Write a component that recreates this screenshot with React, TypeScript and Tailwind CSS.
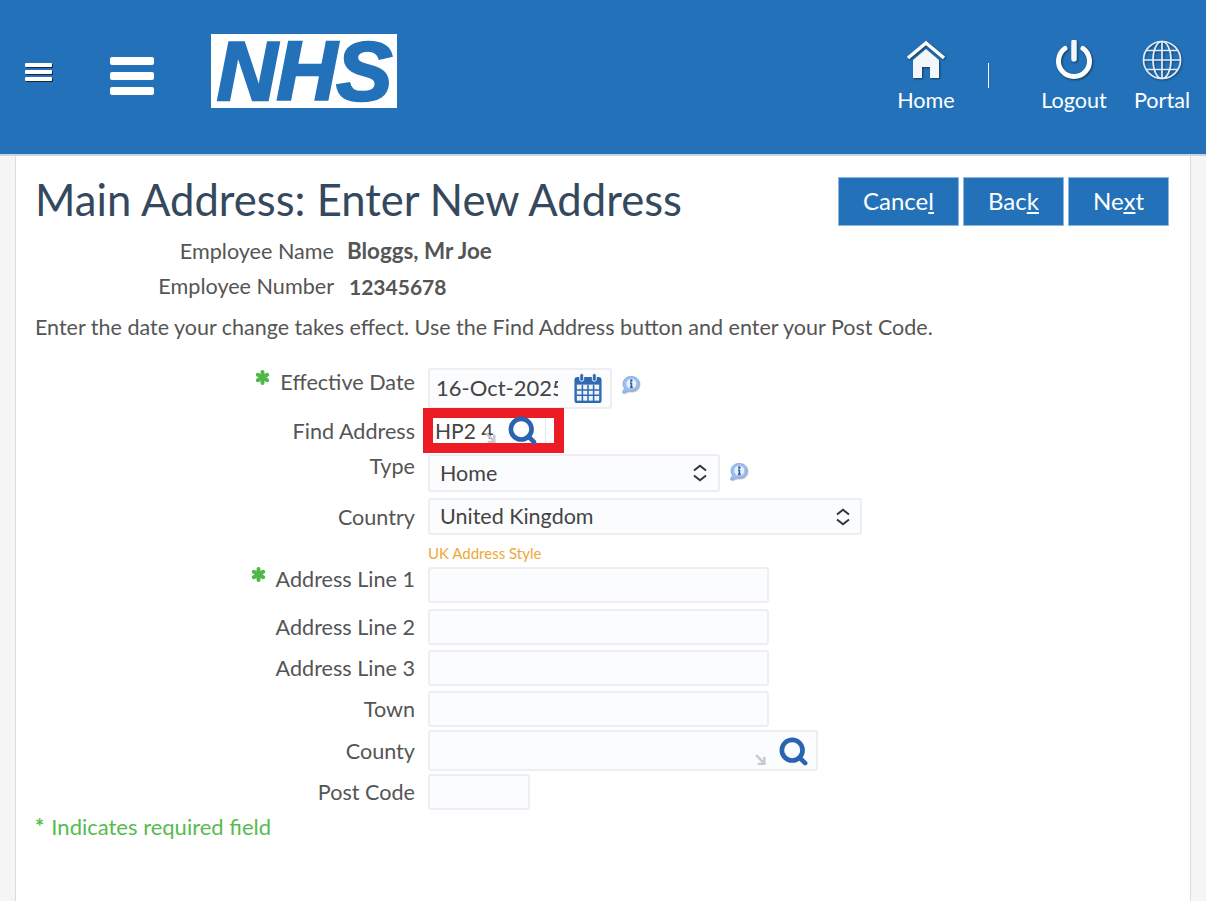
import type { ReactNode } from "react";
import { Search } from "lucide-react";

const lato = "font-['Lato','Liberation_Sans',sans-serif]";

function Star() {
  return (
    <svg viewBox="0 0 16 16" className="w-[15px] h-[15px] mb-[10px] mr-[10px] shrink-0">
      <g stroke="#4fb848" strokeWidth="4.2" strokeLinecap="round">
        <path d="M8 2.2v11.6" />
        <path d="M3 5.1l10 5.8" />
        <path d="M13 5.1L3 10.9" />
      </g>
    </svg>
  );
}

function InfoIcon() {
  return (
    <svg viewBox="0 0 20 20" className="w-[20px] h-[20px] drop-shadow-[1px_1px_0_rgba(0,0,0,0.25)]">
      <path d="M3.5 13.5C2.5 12 2 10.8 2 9 2 5 5.2 1.5 9.5 1.5h1.5c4 0 7 3 7 7s-3 7.5-7 7.5H7l-4.5 1.8c-1 .2-1.4-.6-.9-1.2z" fill="#9dbfee" stroke="#7ba5e0" strokeWidth="0.8" />
      <circle cx="10.3" cy="8.7" r="5" fill="#e8f0fb" />
      <circle cx="10.3" cy="5.6" r="1.3" fill="#2a5fa8" />
      <path d="M10.4 7.8v4.4M9 8h1.4M9 12.4h2.8" stroke="#2a5fa8" strokeWidth="1.6" fill="none" />
    </svg>
  );
}

function CalendarIcon() {
  return (
    <svg viewBox="0 0 30 32" className="w-[30px] h-[31px]">
      <rect x="1" y="4" width="28" height="27" rx="3" fill="#2f69b3" />
      <rect x="3.5" y="12" width="23" height="16.5" fill="#eef3fa" />
      <path d="M9.2 12v17M15 12v17M20.8 12v17M3.5 17.5h23M3.5 23h23" stroke="#2f69b3" strokeWidth="1.6" />
      <rect x="6.5" y="0.5" width="4" height="8" rx="2" fill="#2f69b3" stroke="#fbfcfe" />
      <rect x="19.5" y="0.5" width="4" height="8" rx="2" fill="#2f69b3" stroke="#fbfcfe" />
    </svg>
  );
}

function UpDown() {
  return (
    <svg viewBox="0 0 16 18" className="w-[16px] h-[18px]">
      <path d="M2 6.5L8 1.8l6 4.7M2 11.5l6 4.7 6-4.7" fill="none" stroke="#333" strokeWidth="2" />
    </svg>
  );
}

function CornerArrow({ className }: { className: string }) {
  return (
    <svg viewBox="0 0 10 10" className={className}>
      <path d="M1 1l7 7M8.5 2.5v6.5H2.5" fill="none" stroke="#c9c9c9" strokeWidth="2.2" />
    </svg>
  );
}

function Row({
  label,
  required,
  className,
  labelClass,
  children,
}: {
  label?: string;
  required?: boolean;
  className: string;
  labelClass: string;
  children: ReactNode;
}) {
  return (
    <div className={`flex items-start gap-[13px] ${className}`}>
      <div className={`w-[399px] h-[28px] flex items-center justify-end text-[21.6px] leading-[28px] text-[#555] ${labelClass}`}>
        {required && <Star />}
        {label}
      </div>
      {children}
    </div>
  );
}

const fieldBox = "bg-[#fbfcfe] border-2 border-[#eceef2] rounded-[3px]";

function Btn({ label, under, rest, width }: { label: string; under: string; rest: string; width: string }) {
  return (
    <button className={`h-[49px] ${width} bg-[#2372b9] border border-[#8db8de] text-white text-[24px] pb-[2px]`}>
      {label}
      <span className="underline underline-offset-2">{under}</span>
      {rest}
    </button>
  );
}

export default function App() {
  return (
    <div className={`h-screen overflow-hidden flex flex-col bg-[#f5f5f5] ${lato}`}>
      {/* Header */}
      <header className="h-[156px] shrink-0 bg-[#2372b9] border-b-2 border-[#c9d3dc] flex items-start text-white">
        <div className="ml-[25px] mt-[63px] w-[27px] flex flex-col gap-[3px]">
          <div className="h-[4px] bg-white rounded-[1px] shadow-[1px_1px_0_#1a2530]" />
          <div className="h-[4px] bg-white rounded-[1px] shadow-[1px_1px_0_#1a2530]" />
          <div className="h-[4px] bg-white rounded-[1px] shadow-[1px_1px_0_#1a2530]" />
        </div>
        <div className="ml-[58px] mt-[57px] w-[44px] flex flex-col gap-[7px]">
          <div className="h-[8px] bg-white rounded-[2px]" />
          <div className="h-[8px] bg-white rounded-[2px]" />
          <div className="h-[8px] bg-white rounded-[2px]" />
        </div>
        <div className="ml-[57px] mt-[34px] w-[186px] h-[74px] bg-white flex items-center justify-center">
          <span className="font-['Liberation_Sans',sans-serif] font-bold italic text-[84px] leading-[74px] text-[#2372b9] tracking-[-1px] [-webkit-text-stroke:2.5px_#2372b9]">
            NHS
          </span>
        </div>

        {/* Right nav */}
        <div className="ml-auto relative w-[320px] h-full text-[21.6px]">
          <div className="absolute left-[5px] top-[40px] w-[70px] flex flex-col items-center">
            <svg viewBox="0 0 40 40" className="w-[40px] h-[40px] drop-shadow-[1px_1px_1px_rgba(0,0,0,0.5)]">
              <path d="M2 18L20 3l18 15" fill="none" stroke="white" strokeWidth="3.5" />
              <path d="M7 20L20 9l13 11v18H24V27h-8v11H7z" fill="#f3f7fc" />
            </svg>
            <span className="mt-[7px] leading-[26px]">Home</span>
          </div>
          <div className="absolute left-[102px] top-[63px] w-px h-[25px] bg-white" />
          <div className="absolute left-[148px] top-[40px] w-[80px] flex flex-col items-center">
            <svg viewBox="0 0 40 40" className="w-[40px] h-[40px] drop-shadow-[1px_1px_1px_rgba(0,0,0,0.5)]">
              <path d="M11 8.5a15.5 15.5 0 1 0 18 0" fill="none" stroke="white" strokeWidth="5" strokeLinecap="round" />
              <path d="M20 2v17" stroke="#f3f7fc" strokeWidth="5.5" strokeLinecap="round" />
            </svg>
            <span className="mt-[7px] leading-[26px]">Logout</span>
          </div>
          <div className="absolute left-[236px] top-[40px] w-[80px] flex flex-col items-center">
            <svg viewBox="0 0 40 40" className="w-[40px] h-[40px] drop-shadow-[1px_1px_1px_rgba(0,0,0,0.4)]">
              <g fill="none" stroke="#e3ecf5" strokeWidth="1.7">
                <circle cx="20" cy="20" r="18.5" />
                <ellipse cx="20" cy="20" rx="9" ry="18.5" />
                <path d="M20 1.5v37M1.5 20h37M4.5 10.5h31M4.5 29.5h31" />
              </g>
            </svg>
            <span className="mt-[7px] leading-[26px]">Portal</span>
          </div>
        </div>
      </header>

      {/* Panel */}
      <main className="flex-1 ml-[15px] w-[1176px] bg-white border-x border-[#dcdcdc]">
        <div className="flex items-start justify-between pl-[19px] pr-[21px] pt-[21px]">
          <h1 className="text-[43.6px] leading-[44px] text-[#34495e] font-normal">Main Address: Enter New Address</h1>
          <div className="flex gap-[4px]">
            <Btn label="Cance" under="l" rest="" width="w-[121px]" />
            <Btn label="Bac" under="k" rest="" width="w-[101px]" />
            <Btn label="Ne" under="x" rest="t" width="w-[101px]" />
          </div>
        </div>

        <div className="mt-[7px] flex items-center h-[36px] text-[21.6px] text-[#555]">
          <div className="w-[318px] text-right">Employee Name</div>
          <div className="ml-[13px] font-bold text-[22.4px]">Bloggs, Mr Joe</div>
        </div>
        <div className="flex items-center h-[35px] text-[21.6px] text-[#555]">
          <div className="w-[318px] text-right">Employee Number</div>
          <div className="ml-[15px] font-bold text-[21px]">12345678</div>
        </div>
        <p className="mt-[10px] pl-[19px] h-[26px] text-[21.5px] leading-[26px] text-[#555]">
          Enter the date your change takes effect. Use the Find Address button and enter your Post Code.
        </p>

        {/* Form */}
        <div className="mt-[28px]">
          <Row label="Effective Date" required className="" labelClass="">
            <div className="flex items-start gap-[9px]">
              <div className={`w-[184px] h-[41px] flex items-center pl-[6px] pr-[7px] ${fieldBox}`}>
                <span className="w-[122px] pb-[2px] overflow-hidden whitespace-nowrap text-[22px] text-[#444]">16-Oct-2025</span>
                <span className="ml-auto flex"><CalendarIcon /></span>
              </div>
              <span className="mt-[7px] flex"><InfoIcon /></span>
            </div>
          </Row>

          <Row label="Find Address" className="" labelClass="mt-[8px]">
            <div className="-ml-[5px] -mt-[1px] w-[141px] h-[45px] border-[10px] border-[#ed1c24] bg-white flex items-center relative">
              <span className="ml-[2px] text-[21px] text-[#444]">HP2 4</span>
              <CornerArrow className="absolute left-[52px] top-[14px] w-[11px] h-[11px]" />
              <Search className="absolute left-[74px] top-[-3px] w-[31px] h-[31px] text-[#2a64b0]" strokeWidth={3.6} />
              <div className="absolute left-[112px] top-0 w-px h-full bg-[#e5e7eb]" />
            </div>
          </Row>

          <Row label="Type" className="mt-[1px]" labelClass="-mt-[2px]">
            <div className="flex items-start gap-[9px]">
              <div className={`w-[292px] h-[38px] flex items-center justify-between pl-[10px] pr-[10px] text-[21.5px] text-[#444] ${fieldBox}`}>
                Home
                <UpDown />
              </div>
              <span className="mt-[8px] flex"><InfoIcon /></span>
            </div>
          </Row>

          <Row label="Country" className="mt-[6px]" labelClass="mt-[5px]">
            <div className={`w-[434px] h-[37px] flex items-center justify-between pl-[10px] pr-[9px] text-[21.5px] text-[#444] ${fieldBox}`}>
              United Kingdom
              <UpDown />
            </div>
          </Row>

          <div className="pl-[412px] h-[32px] pt-[8px] text-[15px] leading-[20px] text-[#eda83a]">UK Address Style</div>

          <Row label="Address Line 1" required className="" labelClass="-mt-[2px]">
            <div className={`w-[341px] h-[36px] ${fieldBox}`} />
          </Row>
          <Row label="Address Line 2" className="mt-[6px]" labelClass="mt-[4px]">
            <div className={`w-[341px] h-[36px] ${fieldBox}`} />
          </Row>
          <Row label="Address Line 3" className="mt-[5px]" labelClass="mt-[4px]">
            <div className={`w-[341px] h-[36px] ${fieldBox}`} />
          </Row>
          <Row label="Town" className="mt-[5px]" labelClass="mt-[4px]">
            <div className={`w-[341px] h-[36px] ${fieldBox}`} />
          </Row>
          <Row label="County" className="mt-[3px]" labelClass="mt-[7px]">
            <div className={`w-[390px] h-[41px] relative ${fieldBox}`}>
              <CornerArrow className="absolute right-[50px] top-[22px] w-[11px] h-[11px]" />
              <Search className="absolute right-[7px] top-[4px] w-[31px] h-[31px] text-[#2a64b0]" strokeWidth={3.6} />
            </div>
          </Row>
          <Row label="Post Code" className="mt-[3px]" labelClass="mt-[4px]">
            <div className={`w-[102px] h-[36px] ${fieldBox}`} />
          </Row>

          <p className="mt-[4px] pl-[19px] h-[26px] text-[22px] leading-[26px] text-[#57bb4f]">
            <span className="mr-[7px] font-bold">*</span>Indicates required field
          </p>
        </div>
      </main>
    </div>
  );
}
